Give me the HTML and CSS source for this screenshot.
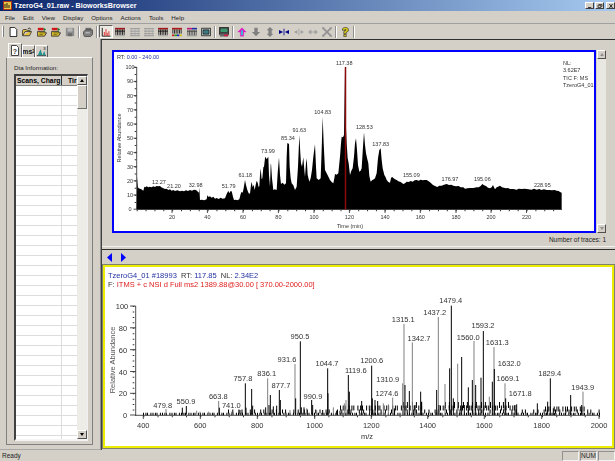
FILE: index.html
```html
<!DOCTYPE html>
<html lang="en">
<head>
<meta charset="utf-8">
<title>TzeroG4_01.raw - BioworksBrowser</title>
<link rel="stylesheet" href="styles.css">
</head>
<body>
<svg class="defs" width="0" height="0" aria-hidden="true">
  <symbol id="i-doc" viewBox="0 0 12 12"><path d="M2.5 .5H8L10.5 3V11.5H2.5Z" fill="#fff" stroke="#000"/></symbol>
  <symbol id="i-folder" viewBox="0 0 12 12"><path d="M.5 10.5V4L2 3H5L6 4H9.500V5.500H3.500L1 10.500H9L11.500 5.500H9" fill="#e6c33c" stroke="#333"/><path d="M7 2.500L8.500 1 11 3" fill="none" stroke="#222"/></symbol>
  <symbol id="i-folder2" viewBox="0 0 12 12"><path d="M.5 11V5.500H9.500V7H11.500L9 11Z" fill="#d8b830" stroke="#333"/><path d="M1 1H8V4H1Z" fill="#d01818"/><path d="M8 1L11 3 8 5Z" fill="#1a7a2a"/><path d="M3 7H9M3 9H7" stroke="#6b6b10"/></symbol>
  <symbol id="i-save" viewBox="0 0 12 12"><path d="M1 1H11V11H1Z" fill="#8c8c8c"/><path d="M3 1.500H9V5.500H3Z" fill="#b8b8b8"/><path d="M3.500 7.500H8.500V11H3.500Z" fill="#6a6a6a"/></symbol>
  <symbol id="i-print" viewBox="0 0 12 12"><path d="M3 1H10V5H3Z" fill="#6e6e6e"/><path d="M.5 6L3 3.500H11.500V9L9 11.500H2L.5 9Z" fill="#808080" stroke="#444"/><path d="M3 7H8" stroke="#ddd"/></symbol>
  <symbol id="i-chart" viewBox="0 0 12 12"><path d="M1.500 1V11H11.500" fill="none" stroke="#000"/><path d="M4 10.500V6M6 10.500V2.500M7.500 10.500V7M9.500 10.500V5" stroke="#e01818"/></symbol>
  <symbol id="i-spec" viewBox="0 0 12 12"><path d="M0 2H12" stroke="#a01818" stroke-width="2"/><path d="M1 3V9.500M3 3V9.500M5 3V9.500M7 3V9.500M9 3V9.500M11 3V9.500" stroke="#111"/><path d="M0 5H12" stroke="#111"/><path d="M0 10.500H12" stroke="#999"/></symbol>
  <symbol id="i-specg" viewBox="0 0 12 12"><path d="M0 2H12M0 5H12M0 8H12M0 10.500H12" stroke="#8a8a8a"/><path d="M2 2V10M6 2V10M10 2V10" stroke="#a8a8a8"/></symbol>
  <symbol id="i-specc" viewBox="0 0 12 12"><path d="M0 2H12" stroke="#b01818" stroke-width="2"/><path d="M1 3V8M3 3V8M5 3V8M7 3V8M9 3V8M11 3V8" stroke="#111"/><path d="M0 10H3" stroke="#d01818" stroke-width="2"/><path d="M3 10H6" stroke="#18a018" stroke-width="2"/><path d="M6 10H9" stroke="#1818d0" stroke-width="2"/><path d="M9 10H12" stroke="#d0c018" stroke-width="2"/></symbol>
  <symbol id="i-specp" viewBox="0 0 12 12"><path d="M0 2H6" stroke="#c01878" stroke-width="2"/><path d="M6 2H12" stroke="#1830a0" stroke-width="2"/><path d="M0 5H12" stroke="#222"/><path d="M1 4V10M3 4V10M5 4V10M7 4V10M9 4V10M11 4V10" stroke="#444"/><path d="M0 10.500H12" stroke="#888"/></symbol>
  <symbol id="i-win" viewBox="0 0 12 12"><path d="M.5 1.500H11.500V10.500H.5Z" fill="#b8c4c4" stroke="#222"/><path d="M2.500 3.500H9.500V8.500H2.500Z" fill="#3a7a80" stroke="#222"/></symbol>
  <symbol id="i-disk" viewBox="0 0 12 12"><path d="M.5 .5H11.500V9H.5Z" fill="#404040" stroke="#222"/><path d="M2 2H10V6H2Z" fill="#3a9a70"/><path d="M1 8H11V11.500H1Z" fill="#666"/><path d="M6 9H11V11H6Z" fill="#d01848"/></symbol>
  <symbol id="i-up" viewBox="0 0 12 12"><path d="M6 1L11 6H8V11H4V6H1Z" fill="#e018c0" stroke="#e018c0" stroke-width=".5"/><path d="M6 4V10" stroke="#20d0e0" stroke-width="2"/></symbol>
  <symbol id="i-down" viewBox="0 0 12 12"><path d="M6 11L11 6H8V1H4V6H1Z" fill="#808080"/></symbol>
  <symbol id="i-updown" viewBox="0 0 12 12"><path d="M6 0L10 4H8V8H10L6 12 2 8H4V4H2Z" fill="#808080"/></symbol>
  <symbol id="i-inb" viewBox="0 0 12 12"><path d="M0 3.500L5 6 0 8.500ZM12 3.500L7 6 12 8.500Z" fill="#00008b"/><path d="M6 2V10" stroke="#00008b"/></symbol>
  <symbol id="i-ing" viewBox="0 0 12 12"><path d="M0 6L4 3.500V8.500ZM12 6L8 3.500V8.500Z" fill="#a0a0a0"/><path d="M6 2V10" stroke="#a0a0a0"/></symbol>
  <symbol id="i-outg" viewBox="0 0 12 12"><path d="M0 6L4 3V9ZM12 6L8 3V9Z" fill="#a0a0a0"/><path d="M3 6H9" stroke="#a0a0a0"/></symbol>
  <symbol id="i-cross" viewBox="0 0 12 12"><path d="M1 1L11 11M11 1L1 11" stroke="#909090" stroke-width="2"/><path d="M0 3V0H3M9 0H12V3M0 9V12H3M9 12H12V9" fill="none" stroke="#909090"/></symbol>
  <symbol id="i-help" viewBox="0 0 12 12"><path d="M3 4V2L5 .5H8L10 2V5L7.500 6.500V8H4.500V5.500L7 4V3H6V4Z" fill="#d8c818" stroke="#222" stroke-width=".7"/><path d="M4.500 9H7.500V11.500H4.500Z" fill="#d8c818" stroke="#222" stroke-width=".7"/></symbol>
</svg>

<div class="window">
  <header class="titlebar">
    <svg class="app-icon" viewBox="0 0 9 9" width="9" height="9"><path d="M0 0H9V9H0Z" fill="#b03018"/><path d="M1 1H8V8H1Z" fill="#e8c848"/><path d="M2 7V3M4 7V2M6 7V4" stroke="#302010"/></svg>
    <span class="title-text">TzeroG4_01.raw - BioworksBrowser</span>
    <div class="win-btns">
      <span class="win-btn"><svg viewBox="0 0 7 5" width="7" height="5"><path d="M1 4.500H5" stroke="#000"/></svg></span>
      <span class="win-btn"><svg viewBox="0 0 7 5" width="7" height="5"><path d="M2.500 1.500V.5H6V3H5M1 1.500H4.500V4.500H1Z" fill="none" stroke="#000" stroke-width=".8"/></svg></span>
      <span class="win-btn win-close"><svg viewBox="0 0 7 5" width="7" height="5"><path d="M1.500 0L5.500 5M5.500 0L1.500 5" stroke="#000"/></svg></span>
    </div>
  </header>

  <nav class="menubar">
    <span class="menu-item">File</span><span class="menu-item">Edit</span><span class="menu-item">View</span><span class="menu-item">Display</span><span class="menu-item">Options</span><span class="menu-item">Actions</span><span class="menu-item">Tools</span><span class="menu-item">Help</span>
  </nav>

  <div class="toolbar">
    <span class="grip"></span>
    <span class="tool"><svg><use href="#i-doc"/></svg></span>
    <span class="tool"><svg><use href="#i-folder"/></svg></span>
    <span class="tool"><svg><use href="#i-folder2"/></svg></span>
    <span class="tool"><svg><use href="#i-folder2"/></svg></span>
    <span class="tool"><svg><use href="#i-save"/></svg></span>
    <span class="sep"></span>
    <span class="tool"><svg><use href="#i-print"/></svg></span>
    <span class="sep"></span>
    <span class="tool tool-on"><svg><use href="#i-chart"/></svg></span>
    <span class="tool"><svg><use href="#i-spec"/></svg></span>
    <span class="tool"><svg><use href="#i-specg"/></svg></span>
    <span class="tool"><svg><use href="#i-specg"/></svg></span>
    <span class="tool"><svg><use href="#i-spec"/></svg></span>
    <span class="tool"><svg><use href="#i-specc"/></svg></span>
    <span class="tool"><svg><use href="#i-specp"/></svg></span>
    <span class="tool"><svg><use href="#i-win"/></svg></span>
    <span class="sep"></span>
    <span class="tool"><svg><use href="#i-disk"/></svg></span>
    <span class="sep"></span>
    <span class="tool"><svg><use href="#i-up"/></svg></span>
    <span class="tool"><svg><use href="#i-down"/></svg></span>
    <span class="tool"><svg><use href="#i-updown"/></svg></span>
    <span class="tool"><svg><use href="#i-inb"/></svg></span>
    <span class="tool"><svg><use href="#i-ing"/></svg></span>
    <span class="tool"><svg><use href="#i-outg"/></svg></span>
    <span class="tool"><svg><use href="#i-cross"/></svg></span>
    <span class="sep"></span>
    <span class="tool"><svg><use href="#i-help"/></svg></span>
    <span class="sep"></span>
  </div>

  <main class="workspace">
    <aside class="sidebar">
      <div class="tabs">
        <span class="tab tab-on"><svg viewBox="0 0 10 11" width="10" height="11"><path d="M1.500 .5H6.500L8.500 2.500V10.500H1.500Z" fill="#fff" stroke="#444"/><text class="tab-q" x="5" y="8.500">?</text></svg></span>
        <span class="tab tab-ms">ms<sup class="tab-sup">2</sup></span>
        <span class="tab"><svg viewBox="0 0 12 11" width="12" height="11"><path d="M1 10H11" stroke="#333"/><path d="M2 9.500L5 3 7 9.500 9 5 10.500 9.500Z" fill="#209090"/><text class="tab-n" x="8" y="4">3</text></svg></span>
      </div>
      <section class="tab-panel">
        <div class="info-label">Dta Information:</div>
        <div class="list">
          <div class="list-main">
            <div class="list-head">
              <span class="col-a">Scans, Charg</span>
              <span class="col-b">Tir</span>
            </div>
            <div class="list-rows"></div>
          </div>
          <div class="vscroll vscroll-list">
            <span class="sb-btn"><span class="arrow-up"></span></span>
            <span class="sb-thumb"></span>
            <span class="sb-track"></span>
            <span class="sb-btn"><span class="arrow-down"></span></span>
          </div>
        </div>
      </section>
    </aside>

    <div class="content">
      <div class="chrom-row">
        <section class="chrom-panel">
          <svg class="plot" viewBox="114 52 480 179" width="480" height="179" role="img" aria-label="Chromatogram">
            <text class="small" x="117" y="59">RT: <tspan class="blue">0.00 - 240.00</tspan></text>
            <text class="small" x="563" y="65">NL:</text>
            <text class="small" x="563" y="72">3.62E7</text>
            <text class="small" x="563" y="80">TIC F: MS</text>
            <text class="small" x="563" y="87">TzeroG4_01</text>
            <text class="small mid" transform="translate(121 138) rotate(-90)">Relative Abundance</text>

            <path d="M136.700 67V209.500H562" class="axis"/>
            <path d="M133.500 67.200H136.700M133.500 81.400H136.700M133.500 95.600H136.700M133.500 109.800H136.700M133.500 124H136.700M133.500 138.200H136.700M133.500 152.400H136.700M133.500 166.600H136.700M133.500 180.800H136.700M133.500 195H136.700M133.500 209.200H136.700" class="axis"/>
            <path d="M172 209.500V213M207.400 209.500V213M243 209.500V213M278.400 209.500V213M314 209.500V213M349.400 209.500V213M385 209.500V213M420.300 209.500V213M456 209.500V213M491 209.500V213M526.500 209.500V213" class="axis"/>
            <line x1="136.700" y1="210.500" x2="562" y2="210.500" class="minor" stroke-dasharray="1 7.860"/>
            <line x1="135.500" y1="67" x2="135.500" y2="209" class="minor" stroke-dasharray="1 6.100"/>

            <g class="small mid">
              <text x="130" y="69">100</text><text x="130" y="83">90</text><text x="130" y="97.500">80</text><text x="130" y="112">70</text><text x="130" y="126">60</text><text x="130" y="140">50</text><text x="130" y="154.500">40</text><text x="130" y="168.500">30</text><text x="130" y="183">20</text><text x="130" y="197">10</text><text x="130" y="211">0</text>
              <text x="172" y="219">20</text><text x="207.400" y="219">40</text><text x="243" y="219">60</text><text x="278.400" y="219">80</text><text x="314" y="219">100</text><text x="349.400" y="219">120</text><text x="385" y="219">140</text><text x="420.300" y="219">160</text><text x="456" y="219">180</text><text x="491" y="219">200</text><text x="526.500" y="219">220</text>
              <text x="350" y="227.500">Time (min)</text>
              <text x="159" y="183.500">12.27</text><text x="174" y="188">21.20</text><text x="195.700" y="186.500">32.98</text><text x="228.700" y="188">51.79</text><text x="245.300" y="177">61.18</text><text x="268" y="153">73.99</text><text x="288" y="140">85.34</text><text x="299.300" y="132">91.63</text><text x="322.700" y="114">104.83</text><text x="344.300" y="65">117.38</text><text x="364.300" y="129">128.53</text><text x="380.700" y="146">137.83</text><text x="411.300" y="176.500">155.09</text><text x="450" y="181">176.97</text><text x="482.300" y="181">195.06</text><text x="542.300" y="186.500">228.95</text>
            </g>

            <g transform="translate(100 50) scale(.33333)">
              <polygon class="trace" points="110,478 112,380 114,412 116,415 124,418 130,422 133,410 136,412 140,409 145,412 150,410 155,412 160,409 165,411 170,408 175,409 180,408 184,412 190,415 195,417 200,416 205,420 210,418 215,422 220,420 225,423 232,421 240,424 246,422 252,424 258,421 264,423 270,420 276,422 282,419 288,420 292,424 297,428 298,412 300,450 306,449 312,451 320,448 322,436 326,441 330,439 335,443 340,440 345,446 350,444 356,447 362,443 368,446 375,445 380,432 385,422 388,430 391,424 395,424 399,440 402,450 408,449 412,451 418,448 422,432 425,425 428,428 431,415 435,390 438,405 442,420 446,430 450,431 453,405 455,395 458,412 461,404 464,420 467,405 470,392 473,398 476,412 478,408 480,375 482,355 485,388 487,385 490,352 492,350 495,325 497,320 500,328 505,320 507,375 510,410 512,345 513,340 516,385 518,402 520,420 524,418 530,420 533,370 537,322 540,375 543,402 548,398 553,404 558,400 560,320 562,278 565,282 567,280 569,350 572,385 575,400 580,406 585,420 590,410 594,350 598,255 601,310 603,340 606,350 610,322 613,360 615,380 618,340 620,325 623,375 628,395 632,385 636,360 640,320 645,283 648,350 650,385 656,390 662,385 665,300 668,200 671,280 675,360 680,370 686,382 690,390 695,396 700,400 703,385 705,372 710,374 715,370 718,340 720,320 723,280 725,260 729,262 732,255 735,52 735,478"/>
            </g>
            <g transform="translate(340 100) scale(.33333)">
              <polygon class="trace" points="15,328 15,-99 17,60 20,130 23,175 26,190 30,225 34,212 38,205 42,170 45,130 48,115 51,150 54,195 58,215 62,212 65,205 69,140 72,97 75,135 78,160 82,178 85,190 88,228 92,245 97,240 102,238 105,235 110,220 114,175 118,150 122,145 125,180 128,205 133,225 137,232 140,240 145,246 150,248 153,235 156,230 160,234 165,238 170,240 175,244 182,246 190,252 195,250 200,245 206,246 212,243 218,245 224,241 230,240 236,242 242,239 248,241 254,240 260,240 266,244 272,248 278,254 285,258 292,261 298,257 305,257 312,254 320,252 327,255 334,254 340,257 348,259 356,258 362,262 370,262 375,266 382,265 390,264 400,264 410,262 416,262 422,258 427,252 432,256 438,258 444,263 450,265 455,262 459,255 462,262 465,268 470,262 474,260 480,257 486,262 492,263 498,265 504,264 510,267 520,267 530,269 536,266 545,267 555,266 565,268 575,269 582,266 590,269 598,267 604,270 612,268 620,270 628,270 636,271 644,270 650,272 656,273 660,276 665,278 665,328"/>
            </g>
            <path d="M345.500 67V209.500" class="red-line"/>
          </svg>
        </section>
        <div class="vscroll vscroll-chrom">
          <span class="sb-btn"><span class="arrow-up arrow-grey"></span></span>
          <span class="sb-track sb-track-light"></span>
          <span class="sb-btn"><span class="arrow-down arrow-grey"></span></span>
        </div>
      </div>

      <div class="traces">Number of traces: 1</div>
      <div class="splitter"></div>

      <div class="nav-row">
        <svg viewBox="0 0 5 9" width="5" height="9"><path d="M5 0V9L0 4.500Z" fill="#0000ff"/></svg>
        <svg viewBox="0 0 5 9" width="5" height="9"><path d="M0 0V9L5 4.500Z" fill="#0000ff"/></svg>
      </div>

      <section class="spec-panel">
        <svg class="plot" viewBox="105 267 507 179" width="507" height="179" role="img" aria-label="Mass spectrum">
          <text class="large" x="108" y="278"><tspan class="navy">TzeroG4_01 #18993</tspan>&#160;&#160;RT: <tspan class="navy">117.85</tspan>&#160;&#160;NL: <tspan class="navy">2.34E2</tspan></text>
          <text class="large" x="108" y="287">F: <tspan class="red">ITMS + c NSI d Full ms2 1389.88@30.00 [ 370.00-2000.00]</tspan></text>
          <text class="large mid grey-text" transform="translate(115 360) rotate(-90)">Relative Abundance</text>

          <path d="M135.700 306V416M135.700 415.300H600" class="axis"/>
          <path d="M130 306H135.700M130 327.800H135.700M130 349.700H135.700M130 371.500H135.700M130 393.300H135.700M130 415H135.700" class="axis"/>
          <path d="M143.300 415V419M200.300 415V419M257.300 415V419M314.700 415V419M371.300 415V419M427.700 415V419M484.300 415V419M541.700 415V419M599 415V419" class="axis"/>
          <line x1="133.500" y1="306" x2="133.500" y2="415" class="minor" stroke-dasharray="1 4.450"/>
          <line x1="143.300" y1="416.500" x2="600" y2="416.500" class="minor" stroke-dasharray="1 13.240"/>

          <g class="large mid axis-labels">
            <text x="122" y="309">100</text><text x="123" y="330.500">80</text><text x="123" y="352.500">60</text><text x="123" y="374.500">40</text><text x="123" y="396">20</text><text x="125" y="417.500">0</text>
            <text x="143.300" y="428">400</text><text x="200.300" y="428">600</text><text x="257.300" y="428">800</text><text x="314.700" y="428">1000</text><text x="371.300" y="428">1200</text><text x="427.700" y="428">1400</text><text x="484.300" y="428">1600</text><text x="541.700" y="428">1800</text><text x="599" y="428">2000</text>
            <text x="367" y="439">m/z</text>
            <text x="162.700" y="408">479.8</text><text x="186" y="403.700">550.9</text><text x="218.300" y="398.700">663.8</text><text x="231.300" y="408">741.0</text><text x="243" y="381">757.8</text><text x="266.700" y="375.700">836.1</text><text x="281" y="388">877.7</text><text x="287" y="362">931.6</text><text x="300" y="338.700">950.5</text><text x="313" y="398.700">990.9</text><text x="327" y="365.700">1044.7</text><text x="355.800" y="373">1119.6</text><text x="371.700" y="363">1200.6</text><text x="387.700" y="381.700">1310.9</text><text x="387" y="395.700">1274.6</text><text x="403.300" y="321.700">1315.1</text><text x="419" y="341">1342.7</text><text x="434.700" y="314.700">1437.2</text><text x="450.700" y="303.400">1479.4</text><text x="468.300" y="339.700">1560.0</text><text x="483" y="328.400">1593.2</text><text x="497.300" y="345">1631.3</text><text x="509.300" y="366.400">1632.0</text><text x="508" y="381.400">1669.1</text><text x="520.300" y="396">1671.8</text><text x="549.700" y="375.700">1829.4</text><text x="582.700" y="389.700">1943.9</text>
          </g>

          <path class="grass-a" d="M143 414H600"/>
          <path class="grass-b" d="M228 411.500H600"/>
          <path class="grass-c" d="M340 408H423M440 408H515M545 409H585"/>
          <path class="grass-d" d="M403 405H423M445 405H510"/>

          <g transform="translate(100 245) scale(.33333)">
            <path class="stick-g" d="M198 509V492M290 509V497M300 509V500M326 509V500M356 509V468M395 509V500M503 509V400M570 509V495M585 509V357M620 509V490M650 509V495M700 509V487M733 509V475M738 509V465"/>
            <path class="stick" d="M247 509V488M259 509V483M358 509V488M420 509V495M436 509V415M438 509V488M455 509V432M458 509V482M497 509V487M507 509V480M511 509V450M520 509V484M530 509V482M538 509V435M541 509V465M587 509V460M601 509V289M604 509V487M612 509V487M635 509V465M638 509V480M668 509V495M683 509V370M684 509V445M710 509V497M720 509V497M745 509V390M748 509V440"/>
          </g>
          <g transform="translate(355 265) scale(.33333)">
            <path class="stick-g" d="M113 450V398M143 450V355M147 450V177M172 450V232M250 450V156M270 450V357M308 450V296M357 450V228M403 450V395M417 450V246M450 450V355M684 450V380M85 450V415M100 450V418"/>
            <path class="stick" d="M20 450V408M50 450V302M52 450V400M60 450V405M68 450V408M118 450V430M150 450V360M163 450V378M180 450V420M197 450V380M200 450V410M245 450V375M252 450V420M284 450V310M289 450V122M295 450V400M320 450V276M328 450V420M340 450V367M352 450V345M362 450V360M378 450V338M385 450V198M412 450V350M418 450V312M452 450V400M480 450V420M485 450V418M547 450V415M578 450V410M586 450V340M595 450V430M647 450V390M680 450V420"/>
          </g>
        </svg>
      </section>
    </div>
  </main>

  <footer class="statusbar">
    <span class="status-text">Ready</span>
    <span class="indicator"></span>
    <span class="indicator">NUM</span>
    <span class="indicator"></span>
  </footer>
</div>
</body>
</html>
```

FILE: styles.css
```css
* { box-sizing: border-box; }

html, body {
  margin: 0;
  padding: 0;
  background: #d4d0c8;
}

.defs { position: absolute; }

.window {
  width: 615px;
  height: 461px;
  display: flex;
  flex-direction: column;
  overflow: hidden;
  background: #d4d0c8;
  font-family: "Liberation Sans", Arial, sans-serif;
  color: #000;
}

/* Title bar */
.titlebar {
  height: 11px;
  flex: none;
  display: flex;
  align-items: center;
  padding-left: 3px;
  background: linear-gradient(90deg, #0a246a 0%, #a6caf0 100%);
}

.app-icon { flex: none; }

.title-text {
  margin-left: 2px;
  font-size: 7.2px;
  font-weight: bold;
  color: #fff;
  white-space: nowrap;
}

.win-btns {
  margin-left: auto;
  display: flex;
  gap: 1px;
}

.win-btn {
  width: 9px;
  height: 7px;
  display: flex;
  align-items: center;
  justify-content: center;
  background: #d4d0c8;
  border-right: 1px solid #404040;
  border-bottom: 1px solid #404040;
  border-top: 1px solid #fff;
  border-left: 1px solid #fff;
}

.win-btn svg { width: 6px; height: 4px; }
.win-close { margin-left: 1px; }

/* Menu */
.menubar {
  height: 13px;
  flex: none;
  display: flex;
  align-items: center;
  padding-left: 1px;
  font-size: 6.2px;
  color: #222;
  border-bottom: 1px solid #a0a0a0;
}

.menu-item { padding: 0 4px; white-space: nowrap; }

/* Toolbar */
.toolbar {
  height: 15px;
  flex: none;
  display: flex;
  align-items: center;
  padding-left: 2px;
}

.grip {
  width: 2px;
  height: 11px;
  margin-right: 2px;
  border-left: 1px solid #fff;
  border-right: 1px solid #808080;
}

.tool {
  width: 14.3px;
  height: 13px;
  flex: none;
  display: flex;
  align-items: center;
  justify-content: center;
}

.tool svg { width: 10px; height: 10px; display: block; }

.tool-on {
  background: #ece9e2;
  border-top: 1px solid #606060;
  border-left: 1px solid #606060;
  border-bottom: 1px solid #fff;
  border-right: 1px solid #fff;
}

.sep {
  width: 2px;
  height: 12px;
  flex: none;
  margin: 0 .75px;
  border-left: 1px solid #909090;
  border-right: 1px solid #fff;
}

/* Workspace */
.workspace {
  flex: 1;
  min-height: 0;
  display: flex;
}

.sidebar {
  width: 101px;
  flex: none;
  padding: 5px 0 4px 6px;
  display: flex;
  flex-direction: column;
  border-bottom: 1px solid #a8a8a8;
  border-right: 1px solid #909090;
}

.tabs {
  height: 13px;
  flex: none;
  display: flex;
  align-items: flex-end;
  padding-left: 2px;
}

.tab {
  width: 13px;
  height: 12px;
  display: flex;
  align-items: center;
  justify-content: center;
  border-top: 1px solid #fff;
  border-left: 1px solid #fff;
  border-right: 1px solid #606060;
  background: #d4d0c8;
  overflow: hidden;
}

.tab-on { width: 14px; height: 14px; }
.tab-ms { font-size: 7px; font-weight: bold; color: #111; }
.tab-sup { font-size: 4.500px; line-height: 0; vertical-align: 3px; }
.tab-q { font-size: 7px; font-weight: bold; fill: #333; text-anchor: middle; }
.tab-n { font-size: 4.500px; fill: #000; }

.tab-panel {
  flex: 1;
  min-height: 0;
  width: 87px;
  display: flex;
  flex-direction: column;
  padding: 6px 4px 3px 7px;
  border-top: 1px solid #fff;
  border-left: 1px solid #808080;
  border-right: 1px solid #808080;
  border-bottom: 1px solid #808080;
}

.info-label {
  height: 8px;
  flex: none;
  font-size: 6.2px;
  line-height: 8px;
  color: #222;
  white-space: nowrap;
}

.list {
  flex: 1;
  min-height: 0;
  margin-top: 2px;
  display: flex;
  background: #fff;
  border-top: 2px solid #404040;
  border-left: 2px solid #404040;
  border-right: 1px solid #f0f0f0;
  border-bottom: 2px solid #f4f4f4;
}

.list-main {
  flex: 1;
  min-width: 0;
  display: flex;
  flex-direction: column;
}

.list-head {
  height: 10px;
  flex: none;
  display: flex;
  font-size: 6.8px;
  font-weight: bold;
  line-height: 9px;
  background: #d4d0c8;
  border-bottom: 1px solid #808080;
}

.col-a {
  width: 46px;
  flex: none;
  padding-left: 1px;
  white-space: nowrap;
  border-right: 1px solid #303030;
}

.col-b {
  flex: 1;
  min-width: 0;
  padding-left: 6px;
  white-space: nowrap;
}

.list-rows {
  flex: 1;
  background-color: #fff;
  background-image:
    linear-gradient(90deg, transparent 45px, #dcdcdc 45px, #dcdcdc 46px, transparent 46px),
    repeating-linear-gradient(180deg, transparent 0, transparent 9px, #dcdcdc 9px, #dcdcdc 10px);
}

/* Scrollbars */
.vscroll {
  flex: none;
  display: flex;
  flex-direction: column;
}

.vscroll-list { width: 10px; }
.vscroll-chrom { width: 9px; height: 183px; margin-left: 1px; }

.sb-btn {
  height: 9px;
  flex: none;
  display: flex;
  align-items: center;
  justify-content: center;
  background: #d4d0c8;
  border-top: 1px solid #fff;
  border-left: 1px solid #fff;
  border-right: 1px solid #505050;
  border-bottom: 1px solid #505050;
}

.sb-thumb {
  height: 24px;
  flex: none;
  background: #d4d0c8;
  border-top: 1px solid #fff;
  border-left: 1px solid #fff;
  border-right: 1px solid #707070;
  border-bottom: 1px solid #707070;
}

.sb-track { flex: 1; background: #eeece6; }
.sb-track-light { background: #e9e7e1; }

.arrow-up, .arrow-down {
  width: 0;
  height: 0;
  border-left: 2.500px solid transparent;
  border-right: 2.500px solid transparent;
}

.arrow-up { border-bottom: 3px solid #000; }
.arrow-down { border-top: 3px solid #000; }
.arrow-grey { border-top-color: #909090; border-bottom-color: #909090; }
.arrow-up.arrow-grey { border-top: 0; }
.arrow-down.arrow-grey { border-bottom: 0; }

/* Right side */
.content {
  flex: 1;
  min-width: 0;
  display: flex;
  flex-direction: column;
  border-left: 1px solid #404040;
  border-top: 1px solid #303030;
  padding-top: 10px;
}

.chrom-row {
  display: flex;
  flex: none;
  padding-left: 10px;
}

.chrom-panel {
  width: 484px;
  height: 183px;
  flex: none;
  background: #fff;
  border: 2px solid #0000ff;
}

.plot { display: block; will-change: transform; }

.traces {
  height: 13px;
  flex: none;
  padding-right: 9px;
  text-align: right;
  font-size: 6.500px;
  line-height: 14px;
  color: #222;
}

.splitter {
  height: 4px;
  flex: none;
  border-top: 1px solid #f0f0ec;
  border-bottom: 1px solid #303030;
}

.nav-row {
  height: 15px;
  flex: none;
  display: flex;
  align-items: center;
  gap: 9px;
  padding-left: 5px;
}

.spec-panel {
  width: 511px;
  height: 183px;
  flex: none;
  margin-left: 1px;
  background: #fff;
  border: 2px solid #ecec00;
  box-shadow: 0 0 0 1px #808070;
}

/* Plot contents */
.small { font-size: 5.500px; fill: #333; }
.large { font-size: 7.500px; fill: #333; }
.mid { text-anchor: middle; }
.blue { fill: #2030a0; }
.navy { fill: #2030a0; }
.red { fill: #e02020; }
.grey-text { fill: #555; }
.axis-labels { fill: #333; }
.axis { fill: none; stroke: #222; stroke-width: .8; }
.minor { stroke: #333; stroke-width: 1.600; }
.trace { fill: #000; }
.red-line { stroke: #8b0a0a; stroke-width: 1.500; fill: none; }
.stick { stroke: #000; stroke-width: 3; fill: none; }
.stick-g { stroke: #808080; stroke-width: 3; fill: none; }
.grass-a, .grass-b, .grass-c, .grass-d { fill: none; stroke: #000; }
.grass-a { stroke-width: 2.500; stroke-dasharray: 1 1.400 1 .6 1 2.400 1 1.100; }
.grass-b { stroke-width: 4; stroke-dasharray: 1 3.300 1 5.100 1 2.100 1 7.300; }
.grass-c { stroke-width: 5; stroke-dasharray: 1 1.700 1 .9 1 3.100; }
.grass-d { stroke-width: 6; stroke-dasharray: 1 2.900 1 4.100; }

/* Status bar */
.statusbar {
  height: 11px;
  flex: none;
  display: flex;
  align-items: center;
  gap: 1px;
  font-size: 6.500px;
  color: #222;
}

.status-text { margin-right: auto; padding-left: 2px; }

.indicator {
  width: 17px;
  height: 10px;
  display: flex;
  align-items: center;
  justify-content: center;
  border-top: 1px solid #909090;
  border-left: 1px solid #909090;
  border-right: 1px solid #f4f4f4;
  border-bottom: 1px solid #f4f4f4;
}
```
